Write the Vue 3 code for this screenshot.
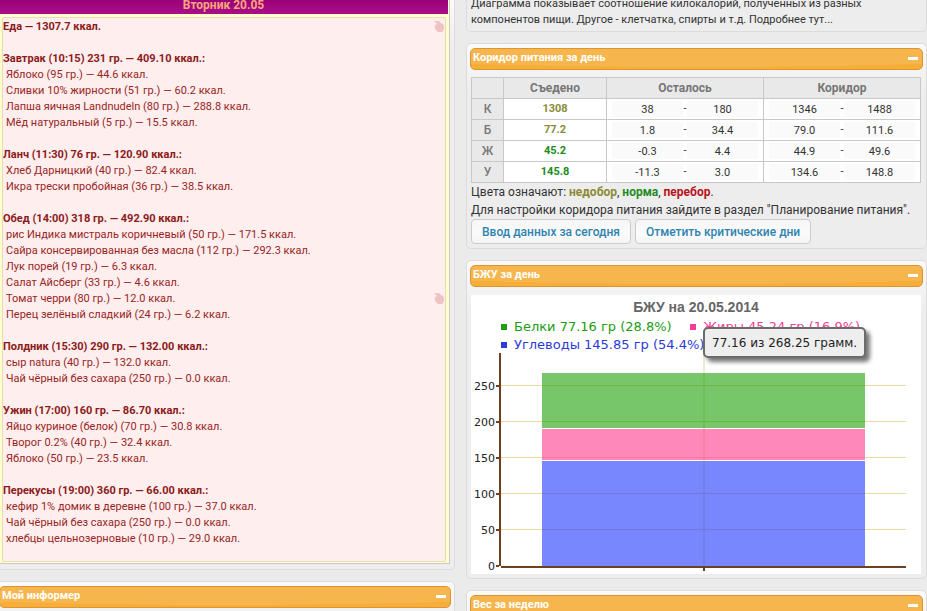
<script setup>
import { computed } from 'vue'

const meals = [
  { title: 'Еда — 1307.7 ккал.', summary: true, items: [] },
  {
    title: 'Завтрак (10:15) 231 гр. — 409.10 ккал.:',
    items: [
      'Яблоко (95 гр.) — 44.6 ккал.',
      'Сливки 10% жирности (51 гр.) — 60.2 ккал.',
      'Лапша яичная Landnudeln (80 гр.) — 288.8 ккал.',
      'Мёд натуральный (5 гр.) — 15.5 ккал.'
    ]
  },
  {
    title: 'Ланч (11:30) 76 гр. — 120.90 ккал.:',
    items: ['Хлеб Дарницкий (40 гр.) — 82.4 ккал.', 'Икра трески пробойная (36 гр.) — 38.5 ккал.']
  },
  {
    title: 'Обед (14:00) 318 гр. — 492.90 ккал.:',
    items: [
      'рис Индика мистраль коричневый (50 гр.) — 171.5 ккал.',
      'Сайра консервированная без масла (112 гр.) — 292.3 ккал.',
      'Лук порей (19 гр.) — 6.3 ккал.',
      'Салат Айсберг (33 гр.) — 4.6 ккал.',
      'Томат черри (80 гр.) — 12.0 ккал.',
      'Перец зелёный сладкий (24 гр.) — 6.2 ккал.'
    ]
  },
  {
    title: 'Полдник (15:30) 290 гр. — 132.00 ккал.:',
    items: ['сыр natura (40 гр.) — 132.0 ккал.', 'Чай чёрный без сахара (250 гр.) — 0.0 ккал.']
  },
  {
    title: 'Ужин (17:00) 160 гр. — 86.70 ккал.:',
    items: [
      'Яйцо куриное (белок) (70 гр.) — 30.8 ккал.',
      'Творог 0.2% (40 гр.) — 32.4 ккал.',
      'Яблоко (50 гр.) — 23.5 ккал.'
    ]
  },
  {
    title: 'Перекусы (19:00) 360 гр. — 66.00 ккал.:',
    items: [
      'кефир 1% домик в деревне (100 гр.) — 37.0 ккал.',
      'Чай чёрный без сахара (250 гр.) — 0.0 ккал.',
      'хлебцы цельнозерновые (10 гр.) — 29.0 ккал.'
    ]
  }
]

const corridor = [
  { name: 'К', eaten: '1308', state: 'low', left: ['38', '180'], range: ['1346', '1488'] },
  { name: 'Б', eaten: '77.2', state: 'low', left: ['1.8', '34.4'], range: ['79.0', '111.6'] },
  { name: 'Ж', eaten: '45.2', state: 'norm', left: ['-0.3', '4.4'], range: ['44.9', '49.6'] },
  { name: 'У', eaten: '145.8', state: 'norm', left: ['-11.3', '3.0'], range: ['134.6', '148.8'] }
]

const legend = [
  { key: 'protein', label: 'Белки 77.16 гр (28.8%)' },
  { key: 'fat', label: 'Жиры 45.24 гр (16.9%)' },
  { key: 'carbs', label: 'Углеводы 145.85 гр (54.4%)' }
]

const baseY = 216
const ticks = computed(() => [0, 50, 100, 150, 200, 250].map((v) => ({ v, y: baseY - (v / 50) * 36 })))
</script>

<template>
  <div class="page">
    <main class="column">
      <section class="panel day-panel">
        <div class="day">
          <h2 class="day-title">Вторник 20.05</h2>
          <div class="day-body">
            <div v-for="meal in meals" :key="meal.title" class="meal">
              <h3 class="meal-title">
                <span>{{ meal.title }}</span>
                <svg v-if="meal.summary" class="mark" viewBox="0 0 10 11" aria-hidden="true">
                  <path d="M0 0h5l2 2 2 1 1 2v3L8 11H4L1 8V4l2-1z" />
                </svg>
              </h3>
              <ul v-if="meal.items.length">
                <li v-for="item in meal.items" :key="item">
                  <span>{{ item }}</span>
                  <svg v-if="item.startsWith('Томат')" class="mark" viewBox="0 0 10 11" aria-hidden="true">
                    <path d="M0 0h5l2 2 2 1 1 2v3L8 11H4L1 8V4l2-1z" />
                  </svg>
                </li>
              </ul>
            </div>
          </div>
        </div>
      </section>
      <section class="panel">
        <header class="bar"><h2>Мой информер</h2><button type="button" class="fold" aria-label="Свернуть"></button></header>
      </section>
    </main>

    <aside class="column">
      <section class="panel note">
        <p>Диаграмма показывает соотношение килокалорий, полученных из разных<br />компонентов пищи. Другое - клетчатка, спирты и т.д. <a href="#">Подробнее тут...</a></p>
      </section>

      <section class="panel">
        <header class="bar"><h2>Коридор питания за день</h2><button type="button" class="fold" aria-label="Свернуть"></button></header>
        <div class="content">
          <table>
            <colgroup><col class="c-name" /><col class="c-eaten" /><col /><col /></colgroup>
            <thead>
              <tr><th></th><th>Съедено</th><th>Осталось</th><th>Коридор</th></tr>
            </thead>
            <tbody>
              <tr v-for="row in corridor" :key="row.name">
                <th>{{ row.name }}</th>
                <td :class="['eaten', row.state]">{{ row.eaten }}</td>
                <td><div class="range"><span>{{ row.left[0] }}</span><i>-</i><span>{{ row.left[1] }}</span></div></td>
                <td><div class="range"><span>{{ row.range[0] }}</span><i>-</i><span>{{ row.range[1] }}</span></div></td>
              </tr>
            </tbody>
          </table>
          <p class="info">Цвета означают: <b class="low">недобор</b>, <b class="norm">норма</b>, <b class="over">перебор</b>.</p>
          <p class="info">Для настройки коридора питания зайдите в раздел "Планирование питания".</p>
          <div class="actions">
            <button type="button">Ввод данных за сегодня</button>
            <button type="button">Отметить критические дни</button>
          </div>
        </div>
      </section>

      <section class="panel">
        <header class="bar"><h2>БЖУ за день</h2><button type="button" class="fold" aria-label="Свернуть"></button></header>
        <figure class="chart">
          <figcaption>БЖУ на 20.05.2014</figcaption>
          <ul class="legend">
            <li v-for="entry in legend" :key="entry.key" :class="entry.key">{{ entry.label }}</li>
          </ul>
          <svg class="plot" viewBox="0 0 450 221">
            <g class="grid">
              <rect x="232" y="0" width="2" height="213" class="mid" />
              <rect v-for="t in ticks.slice(1)" :key="t.v" x="30" :y="t.y - 4" width="405" height="1" />
            </g>
            <g class="bars">
              <rect class="b-protein" x="71" y="20" width="323" height="55" />
              <rect class="b-fat" x="71" y="76" width="323" height="31" />
              <rect class="b-carbs" x="71" y="108" width="323" height="105" />
            </g>
            <g class="axis">
              <rect x="28" y="0" width="2" height="213" />
              <rect x="30" y="213" width="405" height="2" />
              <rect v-for="t in ticks" :key="t.v" x="25" :y="t.y - 4" width="3" height="2" />
              <rect x="232" y="215" width="2" height="3" />
            </g>
            <text v-for="t in ticks" :key="t.v" x="24" :y="t.y + 1" text-anchor="end">{{ t.v }}</text>
          </svg>
          <div class="tip" role="tooltip">77.16 из 268.25 грамм.</div>
        </figure>
      </section>

      <section class="panel">
        <header class="bar"><h2>Вес за неделю</h2><button type="button" class="fold" aria-label="Свернуть"></button></header>
      </section>
    </aside>
  </div>
</template>

<style>
body {
  background: #ebebeb;
}
</style>

<style scoped>
.page {
  display: grid;
  grid-template-columns: 460fr 461fr;
  gap: 11px;
  height: 100vh;
  margin-left: -5px;
  overflow: hidden;
  font-family: "Trebuchet MS", Roboto, sans-serif;
  font-size: 11px;
  line-height: 16px;
  color: #333;
}
h2, h3, p, ul, figure {
  margin: 0;
  padding: 0;
}
ul {
  list-style: none;
}
.column {
  display: flex;
  flex-direction: column;
  gap: 11px;
  min-width: 0;
}
.panel {
  flex: none;
  padding: 4px 3px;
  border: 1px solid #dcdcdc;
  border-radius: 5px;
  background: linear-gradient(#fafafa, #ededed 50px);
}
.panel:last-child {
  min-height: 60px;
}
.bar {
  display: flex;
  justify-content: space-between;
  box-sizing: border-box;
  height: 22px;
  padding: 0 4px 0 2px;
  border: 1px solid #dc9530;
  border-radius: 5px;
  background: radial-gradient(ellipse 90% 90% at 50% 0, #f7b64d 98%, #f6ae38 100%);
}
.bar h2 {
  font-size: 11px;
  line-height: 18px;
  color: #fff;
}
.fold {
  width: 10px;
  height: 3px;
  margin-top: 8px;
  padding: 0;
  border: 0;
  background: #fff;
}

.day-panel {
  padding: 0 4px 5px 3px;
  border-top: 0;
  border-radius: 0 0 5px 5px;
}
.day {
  padding-right: 1px;
  border-right: 1px solid #c9c9c9;
  border-bottom: 1px solid #c9c9c9;
  background: #ffc;
}
.day-title {
  height: 14px;
  background: linear-gradient(#9b0076, #a8108a);
  font-size: 12px;
  line-height: 11px;
  text-align: center;
  color: #f9a67c;
}
.day-body {
  margin: 3px 2px 1px 3px;
  padding: 1px 1px 14px 0;
  border: 1px solid #e6dcb8;
  border-radius: 2px;
  background: #fee;
  color: #982525;
}
.meal + .meal {
  margin-top: 16px;
}
.meal-title {
  display: flex;
  justify-content: space-between;
  font-size: 11px;
  line-height: 16px;
  color: #8b1a1a;
}
.meal li {
  display: flex;
  justify-content: space-between;
  padding-left: 3px;
}
.mark {
  width: 10px;
  height: 11px;
  margin-top: 2px;
  fill: #efc3c3;
}

.note {
  height: 29px;
  padding: 0 4px 2px;
  border-top: 0;
  border-radius: 0 0 5px 5px;
  background: #ededed;
}
.note p {
  margin-top: -4px;
}
.note a {
  color: inherit;
  text-decoration: none;
}
.content {
  padding: 7px 2px 0 1px;
}
table {
  width: 100%;
  border-collapse: collapse;
  table-layout: fixed;
  text-align: center;
}
.c-name {
  width: 32px;
}
.c-eaten {
  width: 103px;
}
th, td {
  height: 20px;
  padding: 0;
  border: 1px solid #c8c8c8;
}
th {
  background: #e9e9e9;
  font-size: 12px;
  color: #777;
}
tbody th {
  font-weight: 500;
}
td {
  background: #fff;
}
.eaten {
  font-weight: 700;
}
.low {
  color: #8b8b35;
}
.norm {
  color: #228b22;
}
.over {
  color: #b81420;
}
.range {
  display: grid;
  grid-template-columns: 1fr 4px 1fr;
  padding: 0 5px;
}
.range span {
  height: 16px;
  background: #fafafa;
  line-height: 18px;
}
.range i {
  font-style: normal;
}
.info {
  font-size: 12px;
  line-height: 18px;
  white-space: nowrap;
}
.actions {
  display: flex;
  gap: 4px;
}
.actions button {
  height: 25px;
  padding: 0 10px;
  border: 1px solid #ccc;
  border-radius: 4px;
  background: linear-gradient(#f6f6f6, #fbfbfb 60%, #f4f4f4);
  font: 500 12px "Trebuchet MS", Roboto, sans-serif;
  color: #2e83b0;
}

.chart {
  position: relative;
  margin: 8px 2px 0 1px;
  padding-top: 3px;
  background: #fff;
}
.chart figcaption {
  font: bold 14px/18px "Liberation Sans", Arial, sans-serif;
  text-align: center;
  color: #666;
}
.legend {
  display: grid;
  grid-template-columns: 189px 1fr;
  margin: 2px 0 -1px 30px;
  font: 13px/18px Verdana, "DejaVu Sans", sans-serif;
}
.legend li {
  display: flex;
  align-items: center;
  gap: 7px;
  white-space: nowrap;
}
.legend li::before {
  content: "";
  flex: none;
  width: 6px;
  height: 6px;
  background: currentColor;
}
.protein {
  color: #229c10;
}
.fat {
  color: #f73c94;
}
.carbs {
  color: #2b3bd8;
}
.plot {
  display: block;
  width: 100%;
}
.plot text {
  font: 11px Verdana, "DejaVu Sans", sans-serif;
  fill: #222;
}
.bars {
  fill-opacity: 0.6;
}
.b-protein {
  fill: #1ea007;
}
.b-fat {
  fill: #ff398e;
}
.b-carbs {
  fill: #1f37ff;
}
.grid {
  fill: #ecdba2;
}
.mid {
  fill: #f3e9cc;
}
.axis {
  fill: #6e4020;
}
.tip {
  position: absolute;
  top: 32px;
  left: 232px;
  padding: 6px 7px 5px;
  border: 2px solid #6b6b6b;
  border-radius: 5px;
  background: #eee;
  box-shadow: 4px 4px 4px #777;
  font: 12px/16px Verdana, "DejaVu Sans", sans-serif;
  color: #222;
  white-space: nowrap;
}
</style>
